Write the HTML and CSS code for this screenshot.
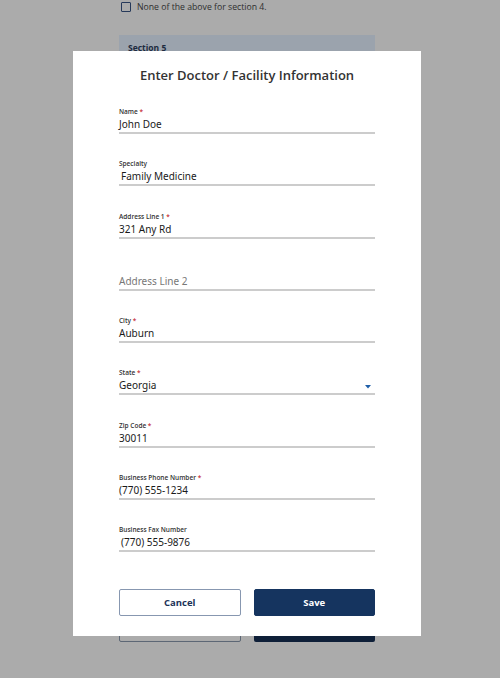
FILE: index.html
```html
<!DOCTYPE html>
<html lang="en">
<head>
<meta charset="utf-8">
<title>Enter Doctor / Facility Information</title>
<link rel="stylesheet" href="styles.css">
</head>
<body>
<div class="page">
  <label class="check-row"><span class="checkbox"></span><span class="check-text">None of the above for section 4.</span></label>
  <div class="section-head">Section 5</div>
  <div class="page-spacer"></div>
  <div class="page-buttons">
    <div class="pbtn pbtn-outline"></div>
    <div class="pbtn pbtn-solid"></div>
  </div>
</div>

<div class="modal">
  <h2 class="modal-title">Enter Doctor / Facility Information</h2>
  <div class="fields">
    <div class="field">
      <div class="label">Name <span class="req">*</span></div>
      <div class="value">John Doe</div>
    </div>
    <div class="field">
      <div class="label">Specialty</div>
      <div class="value indent">Family Medicine</div>
    </div>
    <div class="field">
      <div class="label">Address Line 1 <span class="req">*</span></div>
      <div class="value">321 Any Rd</div>
    </div>
    <div class="field">
      <div class="label"></div>
      <div class="value placeholder">Address Line 2</div>
    </div>
    <div class="field">
      <div class="label">City <span class="req">*</span></div>
      <div class="value">Auburn</div>
    </div>
    <div class="field">
      <div class="label">State <span class="req">*</span></div>
      <div class="value select">Georgia
        <svg class="caret" width="6" height="4" viewBox="0 0 6 4"><path d="M0 0H6L3 3.5Z" fill="#1f5ea8"/></svg>
      </div>
    </div>
    <div class="field">
      <div class="label">Zip Code <span class="req">*</span></div>
      <div class="value">30011</div>
    </div>
    <div class="field">
      <div class="label">Business Phone Number <span class="req">*</span></div>
      <div class="value">(770) 555-1234</div>
    </div>
    <div class="field">
      <div class="label">Business Fax Number</div>
      <div class="value indent">(770) 555-9876</div>
    </div>
  </div>
  <div class="actions">
    <button class="btn btn-cancel">Cancel</button>
    <button class="btn btn-save">Save</button>
  </div>
</div>
</body>
</html>
```

FILE: styles.css
```css
html, body {
  margin: 0;
  padding: 0;
}
body {
  background: #ababab;
  width: 500px;
  height: 678px;
  overflow: hidden;
  font-family: "Open Sans", "Noto Sans", sans-serif;
  color: #333;
}
.page {
  width: 256px;
  margin-left: 119px;
  display: flex;
  flex-direction: column;
}
.check-row {
  display: flex;
  align-items: center;
  gap: 6px;
  margin-top: 1px;
  height: 12px;
  padding-left: 2px;
}
.checkbox {
  width: 8px;
  height: 8px;
  border: 1.5px solid #26395a;
  border-radius: 1px;
}
.check-text {
  font-size: 8.7px;
  color: #2f2f2f;
}
.section-head {
  margin-top: 22px;
  background: #9ba3ad;
  height: 40px;
  padding: 7px 9px;
  box-sizing: border-box;
  font-size: 8.5px;
  font-weight: 700;
  color: #1d2b40;
}
.page-spacer {
  height: 540px;
}
.page-buttons {
  display: grid;
  grid-template-columns: 1fr 1fr;
  gap: 13px;
}
.pbtn {
  height: 27px;
  box-sizing: border-box;
  border-radius: 2px;
}
.pbtn-outline {
  border: 1px solid #5d6775;
  background: #ababab;
}
.pbtn-solid {
  background: #0e1f38;
}

.modal {
  position: absolute;
  left: 73px;
  top: 51px;
  width: 348px;
  height: 585px;
  background: #fff;
  box-sizing: border-box;
  padding: 14px 46px 0 46px;
}
.modal-title {
  margin: 0;
  text-align: center;
  font-size: 13px;
  line-height: 20px;
  font-weight: 600;
  color: #333;
}
.fields {
  display: flex;
  flex-direction: column;
  gap: 25.3px;
  margin-top: 22px;
}
.field {
  border-bottom: 2px solid #cccccc;
}
.label {
  height: 9px;
  line-height: 9px;
  font-size: 6.5px;
  font-weight: 600;
  color: #333;
  margin-bottom: 1px;
}
.req {
  color: #c8333a;
}
.value {
  font-family: "Noto Sans", "Open Sans", sans-serif;
  font-size: 10px;
  line-height: 15px;
  height: 15px;
  color: #1a1a1a;
}
.indent {
  padding-left: 2px;
}
.placeholder {
  color: #777;
}
.select {
  display: flex;
  align-items: center;
  justify-content: space-between;
}
.caret {
  margin-right: 4px;
  margin-top: 2px;
}
.actions {
  display: grid;
  grid-template-columns: 1fr 1fr;
  gap: 13px;
  margin-top: 37px;
}
.btn {
  height: 27px;
  border-radius: 2px;
  font-family: "Open Sans", sans-serif;
  font-size: 9.5px;
  font-weight: 700;
  cursor: pointer;
  padding: 0;
}
.btn-cancel {
  background: #fff;
  border: 1px solid #8797b0;
  color: #1c3358;
}
.btn-save {
  background: #15345f;
  border: 1px solid #15345f;
  color: #fff;
}
```
